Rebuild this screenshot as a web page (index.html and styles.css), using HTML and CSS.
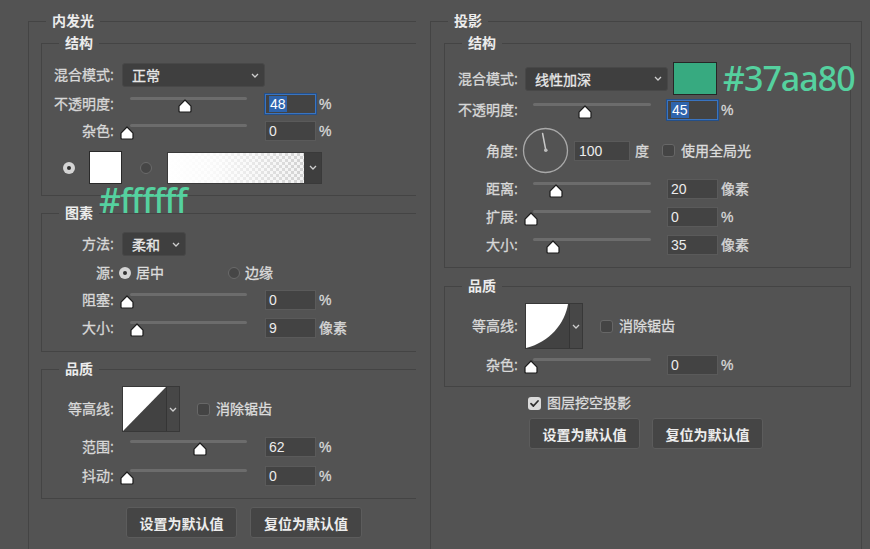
FILE: index.html
```html
<!DOCTYPE html>
<html lang="zh-CN">
<head>
<meta charset="utf-8">
<title>图层样式</title>
<link rel="stylesheet" href="styles.css">
</head>
<body>
<div class="page">
  <section class="col-left">
    <div class="outer outer-left">
      <div class="title">内发光</div>

      <div class="box box-l pl-struct">
        <div class="title">结构</div>
        <div class="row h24">
          <span class="lbl">混合模式:</span>
          <div class="select w143"><span>正常</span><svg class="chev" width="8" height="5" viewBox="0 0 8 5"><path d="M1 1l3 3 3-3" fill="none" stroke="#cfcfcf" stroke-width="1.3"/></svg></div>
        </div>
        <div class="row h20 mt7">
          <span class="lbl">不透明度:</span>
          <div class="slider"><div class="track"></div><svg class="thumb" style="left:56px" width="14" height="14" viewBox="0 0 14 14"><path d="M7 1L13 7.2V12Q13 13 12 13H2Q1 13 1 12V7.2Z" fill="#fff" stroke="#1c1c1c" stroke-width="1.2" stroke-linejoin="round"/></svg></div>
          <div class="num focus"><span class="sel">48</span></div>
          <span class="unit">%</span>
        </div>
        <div class="row h20 mt7">
          <span class="lbl">杂色:</span>
          <div class="slider"><div class="track"></div><svg class="thumb" style="left:-2px" width="14" height="14" viewBox="0 0 14 14"><path d="M7 1L13 7.2V12Q13 13 12 13H2Q1 13 1 12V7.2Z" fill="#fff" stroke="#1c1c1c" stroke-width="1.2" stroke-linejoin="round"/></svg></div>
          <div class="num">0</div>
          <span class="unit">%</span>
        </div>
        <div class="row h33 mt10 colors">
          <span class="radio on"></span>
          <span class="swatch white"></span>
          <span class="radio off r2"></span>
          <div class="gradient"><div class="grad-fill"></div><div class="grad-btn"><svg class="chev" width="8" height="5" viewBox="0 0 8 5"><path d="M1 1l3 3 3-3" fill="none" stroke="#cfcfcf" stroke-width="1.3"/></svg></div></div>
        </div>
      </div>

      <div class="box box-l pl-elem mt17">
        <div class="title">图素</div>
        <div class="row h24">
          <span class="lbl">方法:</span>
          <div class="select w64"><span>柔和</span><svg class="chev" width="8" height="5" viewBox="0 0 8 5"><path d="M1 1l3 3 3-3" fill="none" stroke="#cfcfcf" stroke-width="1.3"/></svg></div>
        </div>
        <div class="row h16 mt9">
          <span class="lbl lbl-tight">源:</span>
          <span class="radio on"></span>
          <span class="opt">居中</span>
          <span class="radio off r-edge"></span>
          <span class="opt">边缘</span>
        </div>
        <div class="row h20 mt9">
          <span class="lbl">阻塞:</span>
          <div class="slider"><div class="track"></div><svg class="thumb" style="left:-2px" width="14" height="14" viewBox="0 0 14 14"><path d="M7 1L13 7.2V12Q13 13 12 13H2Q1 13 1 12V7.2Z" fill="#fff" stroke="#1c1c1c" stroke-width="1.2" stroke-linejoin="round"/></svg></div>
          <div class="num">0</div>
          <span class="unit">%</span>
        </div>
        <div class="row h20 mt8">
          <span class="lbl">大小:</span>
          <div class="slider"><div class="track"></div><svg class="thumb" style="left:8px" width="14" height="14" viewBox="0 0 14 14"><path d="M7 1L13 7.2V12Q13 13 12 13H2Q1 13 1 12V7.2Z" fill="#fff" stroke="#1c1c1c" stroke-width="1.2" stroke-linejoin="round"/></svg></div>
          <div class="num">9</div>
          <span class="unit">像素</span>
        </div>
      </div>

      <div class="box box-l pl-qual mt17">
        <div class="title">品质</div>
        <div class="row h46">
          <span class="lbl">等高线:</span>
          <div class="contour">
            <svg class="curve" width="43" height="44" viewBox="0 0 43 44" preserveAspectRatio="none"><rect width="43" height="44" fill="#424242"/><path d="M0 0H43L0 44Z" fill="#fff"/></svg>
            <div class="contour-btn"><svg class="chev" width="8" height="5" viewBox="0 0 8 5"><path d="M1 1l3 3 3-3" fill="none" stroke="#cfcfcf" stroke-width="1.3"/></svg></div>
          </div>
          <span class="check aa"></span>
          <span class="opt">消除锯齿</span>
        </div>
        <div class="row h20 mt5">
          <span class="lbl">范围:</span>
          <div class="slider"><div class="track"></div><svg class="thumb" style="left:71px" width="14" height="14" viewBox="0 0 14 14"><path d="M7 1L13 7.2V12Q13 13 12 13H2Q1 13 1 12V7.2Z" fill="#fff" stroke="#1c1c1c" stroke-width="1.2" stroke-linejoin="round"/></svg></div>
          <div class="num">62</div>
          <span class="unit">%</span>
        </div>
        <div class="row h20 mt9">
          <span class="lbl">抖动:</span>
          <div class="slider"><div class="track"></div><svg class="thumb" style="left:-2px" width="14" height="14" viewBox="0 0 14 14"><path d="M7 1L13 7.2V12Q13 13 12 13H2Q1 13 1 12V7.2Z" fill="#fff" stroke="#1c1c1c" stroke-width="1.2" stroke-linejoin="round"/></svg></div>
          <div class="num">0</div>
          <span class="unit">%</span>
        </div>
      </div>

      <div class="btns btns-l">
        <button class="btn">设置为默认值</button>
        <button class="btn">复位为默认值</button>
      </div>
    </div>
  </section>

  <section class="col-right">
    <div class="outer outer-right">
      <div class="title">投影</div>

      <div class="box box-r pr-struct">
        <div class="title">结构</div>
        <div class="row h33">
          <span class="lbl">混合模式:</span>
          <div class="select w143"><span>线性加深</span><svg class="chev" width="8" height="5" viewBox="0 0 8 5"><path d="M1 1l3 3 3-3" fill="none" stroke="#cfcfcf" stroke-width="1.3"/></svg></div>
          <span class="swatch green"></span>
        </div>
        <div class="row h20 mt5">
          <span class="lbl">不透明度:</span>
          <div class="slider"><div class="track"></div><svg class="thumb" style="left:53px" width="14" height="14" viewBox="0 0 14 14"><path d="M7 1L13 7.2V12Q13 13 12 13H2Q1 13 1 12V7.2Z" fill="#fff" stroke="#1c1c1c" stroke-width="1.2" stroke-linejoin="round"/></svg></div>
          <div class="num focus"><span class="sel">45</span></div>
          <span class="unit">%</span>
        </div>
        <div class="row h47 mt7">
          <span class="lbl lbl-dial">角度:</span>
          <svg class="dial" width="47" height="47" viewBox="0 0 47 47"><circle cx="23.5" cy="23.5" r="22" fill="none" stroke="#a9a9a9" stroke-width="1.3"/><path d="M23.8 23.2L20.6 6.5" stroke="#c8c8c8" stroke-width="1.5" stroke-linecap="round"/><circle cx="23.8" cy="23.2" r="1.8" fill="#bdbdbd"/></svg>
          <div class="num num-angle">100</div>
          <span class="unit deg">度</span>
          <span class="check global"></span>
          <span class="opt">使用全局光</span>
        </div>
        <div class="row h20 mt5">
          <span class="lbl">距离:</span>
          <div class="slider"><div class="track"></div><svg class="thumb" style="left:24px" width="14" height="14" viewBox="0 0 14 14"><path d="M7 1L13 7.2V12Q13 13 12 13H2Q1 13 1 12V7.2Z" fill="#fff" stroke="#1c1c1c" stroke-width="1.2" stroke-linejoin="round"/></svg></div>
          <div class="num">20</div>
          <span class="unit">像素</span>
        </div>
        <div class="row h20 mt8">
          <span class="lbl">扩展:</span>
          <div class="slider"><div class="track"></div><svg class="thumb" style="left:-1px" width="14" height="14" viewBox="0 0 14 14"><path d="M7 1L13 7.2V12Q13 13 12 13H2Q1 13 1 12V7.2Z" fill="#fff" stroke="#1c1c1c" stroke-width="1.2" stroke-linejoin="round"/></svg></div>
          <div class="num">0</div>
          <span class="unit">%</span>
        </div>
        <div class="row h20 mt8">
          <span class="lbl">大小:</span>
          <div class="slider"><div class="track"></div><svg class="thumb" style="left:21px" width="14" height="14" viewBox="0 0 14 14"><path d="M7 1L13 7.2V12Q13 13 12 13H2Q1 13 1 12V7.2Z" fill="#fff" stroke="#1c1c1c" stroke-width="1.2" stroke-linejoin="round"/></svg></div>
          <div class="num">35</div>
          <span class="unit">像素</span>
        </div>
      </div>

      <div class="box box-r pr-qual mt18">
        <div class="title">品质</div>
        <div class="row h46">
          <span class="lbl">等高线:</span>
          <div class="contour">
            <svg class="curve" width="43" height="44" viewBox="0 0 43 44" preserveAspectRatio="none"><rect width="43" height="44" fill="#424242"/><path d="M0 0H42C39 19 24 38 0 44Z" fill="#fff"/></svg>
            <div class="contour-btn"><svg class="chev" width="8" height="5" viewBox="0 0 8 5"><path d="M1 1l3 3 3-3" fill="none" stroke="#cfcfcf" stroke-width="1.3"/></svg></div>
          </div>
          <span class="check aa"></span>
          <span class="opt">消除锯齿</span>
        </div>
        <div class="row h20 mt6">
          <span class="lbl">杂色:</span>
          <div class="slider"><div class="track"></div><svg class="thumb" style="left:-1px" width="14" height="14" viewBox="0 0 14 14"><path d="M7 1L13 7.2V12Q13 13 12 13H2Q1 13 1 12V7.2Z" fill="#fff" stroke="#1c1c1c" stroke-width="1.2" stroke-linejoin="round"/></svg></div>
          <div class="num">0</div>
          <span class="unit">%</span>
        </div>
      </div>

      <div class="row h16 mt8 knock">
        <span class="check checked"><svg width="13" height="13" viewBox="0 0 13 13"><path d="M3 6.6l2.4 2.4 4.6-5" fill="none" stroke="#2e2e2e" stroke-width="1.8" stroke-linecap="round" stroke-linejoin="round"/></svg></span>
        <span class="opt">图层挖空投影</span>
      </div>

      <div class="btns btns-r">
        <button class="btn">设置为默认值</button>
        <button class="btn">复位为默认值</button>
      </div>
    </div>
  </section>

  <div class="note note-white">#ffffff</div>
  <div class="note note-green">#37aa80</div>
</div>
</body>
</html>
```

FILE: styles.css
```css
* { box-sizing: border-box; }

html, body {
  margin: 0;
  padding: 0;
  background: #535353;
}

body {
  width: 870px;
  height: 549px;
  overflow: hidden;
  font-family: "Liberation Sans", "Noto Sans CJK SC", sans-serif;
  font-size: 14px;
  color: #d6d6d6;
}

.page {
  position: relative;
  display: flex;
  width: 870px;
  height: 549px;
  overflow: hidden;
}

.col-left {
  width: 416px;
  flex: none;
  overflow: hidden;
}

.col-right {
  flex: none;
  margin-left: 14px;
}

/* frames */
.outer {
  position: relative;
  border: 1px solid #444444;
  height: 700px;
  margin-top: 21px;
  padding-top: 21px;
}

.outer-left {
  width: 440px;
  margin-left: 28px;
  padding-left: 12px;
}

.outer-right {
  width: 432px;
  padding-left: 13px;
}

.box {
  position: relative;
  border: 1px solid #444444;
}

.box-l { width: 420px; }
.box-r { width: 407px; }

.title {
  position: absolute;
  top: -9px;
  left: 17px;
  padding: 0 6px;
  background: #535353;
  font-size: 14px;
  line-height: 16px;
  font-weight: bold;
  color: #ececec;
  white-space: nowrap;
}

.pl-struct { padding: 19px 0 11px; }
.pl-elem { padding: 18px 0 13px; }
.pl-qual { padding: 16px 0 12px; }
.pr-struct { padding: 18px 0 12px; }
.pr-qual { padding: 16px 0 11px; }

/* rows */
.row {
  display: flex;
  align-items: center;
}

.h16 { height: 16px; }
.h20 { height: 20px; }
.h24 { height: 24px; }
.h33 { height: 33px; }
.h46 { height: 46px; }
.h47 { height: 47px; }

.mt5 { margin-top: 5px; }
.mt6 { margin-top: 6px; }
.mt7 { margin-top: 7px; }
.mt8 { margin-top: 8px; }
.mt9 { margin-top: 9px; }
.mt10 { margin-top: 10px; }
.mt17 { margin-top: 17px; }
.mt18 { margin-top: 18px; }

.lbl, .opt, .unit, .select {
  -webkit-text-stroke: 0.3px currentColor;
}

.lbl {
  flex: none;
  width: 72px;
  margin-right: 8px;
  text-align: right;
  line-height: 20px;
  white-space: nowrap;
  color: #d8d8d8;
}

.box-r .lbl {
  width: 73px;
  margin-right: 7px;
}

.lbl-tight { margin-right: 5px; }
.box-r .lbl-dial { margin-right: 4px; }

.opt {
  line-height: 16px;
  white-space: nowrap;
  color: #dcdcdc;
  margin-left: 5px;
}

/* select */
.select {
  flex: none;
  display: flex;
  align-items: center;
  justify-content: space-between;
  height: 24px;
  padding: 0 5px 0 9px;
  background: #3f3f3f;
  border: 1px solid #484848;
  border-radius: 3px;
  color: #e8e8e8;
  white-space: nowrap;
}

.w143 { width: 143px; }
.w64 { width: 64px; }

.chev { display: block; flex: none; }

/* slider */
.slider {
  position: relative;
  flex: none;
  width: 125px;
  height: 20px;
  margin-right: 18px;
}

.box-r .slider {
  width: 126px;
  margin-right: 16px;
}

.track {
  position: absolute;
  left: 8px;
  right: 0;
  top: 3px;
  height: 3px;
  border-radius: 2px;
  background: #6c6c6c;
}

.thumb {
  position: absolute;
  top: 5px;
  display: block;
}

/* number input */
.num {
  flex: none;
  display: flex;
  align-items: center;
  width: 51px;
  height: 20px;
  padding-left: 3px;
  background: #434343;
  border: 1px solid #5a5a5a;
  color: #ececec;
  font-size: 14px;
}

.num.focus {
  border-color: #3a74c0;
  box-shadow: 0 0 0 1px #244f88;
}

.sel {
  display: inline-flex;
  align-items: center;
  height: 16px;
  padding: 0 1px;
  background: #2e64ad;
  color: #ffffff;
}

.num-angle {
  width: 56px;
  margin-left: 5px;
  padding-left: 4px;
}

.unit {
  margin-left: 3px;
  line-height: 20px;
  white-space: nowrap;
  color: #d8d8d8;
}

.unit.deg { margin-left: 5px; }

/* radios, checks */
.radio {
  flex: none;
  position: relative;
  width: 12px;
  height: 12px;
  border-radius: 50%;
}

.radio.on {
  background: #d4d4d4;
}

.radio.on::after {
  content: "";
  position: absolute;
  left: 4px;
  top: 4px;
  width: 4px;
  height: 4px;
  border-radius: 50%;
  background: #303030;
}

.radio.off {
  background: #464646;
  border: 1px solid #6a6a6a;
}

.r-edge { margin-left: 64px; }

.check {
  flex: none;
  display: block;
  width: 13px;
  height: 13px;
  border-radius: 3px;
  background: #444444;
  border: 1px solid #676767;
}

.check.checked {
  background: #dadada;
  border: none;
}

.check.checked svg { display: block; }

.check.aa { margin-left: 17px; }
.check.global { margin-left: 13px; }
.check + .opt { margin-left: 6px; }

/* colors row */
.colors { padding-left: 21px; }

.swatch {
  flex: none;
  display: block;
  border: 1px solid #2a2a2a;
}

.swatch.white {
  width: 33px;
  height: 33px;
  margin-left: 14px;
  background: #ffffff;
}

.swatch.green {
  width: 44px;
  height: 33px;
  margin-left: 5px;
  background: #37aa80;
  border-color: #262626;
}

.r2 { margin-left: 18px; }

.gradient {
  flex: none;
  display: flex;
  width: 155px;
  height: 32px;
  margin-left: 15px;
  border: 1px solid #3a3a3a;
}

.grad-fill {
  flex: 1;
  background:
    linear-gradient(to right, #ffffff 0%, rgba(255,255,255,0.85) 35%, rgba(255,255,255,0) 100%),
    conic-gradient(#d2d2d2 25%, #f4f4f4 0 50%, #d2d2d2 0 75%, #f4f4f4 0) 0 0 / 6px 6px;
}

.grad-btn {
  flex: none;
  width: 17px;
  display: flex;
  align-items: center;
  justify-content: center;
  background: #3e3e3e;
}

/* contour */
.contour {
  flex: none;
  display: flex;
  width: 58px;
  height: 46px;
  border: 1px solid #383838;
}

.curve { display: block; flex: none; }

.contour-btn {
  flex: 1;
  display: flex;
  align-items: center;
  justify-content: center;
  background: #474747;
  border-left: 1px solid #353535;
}

/* knockout + buttons */
.knock { padding-left: 84px; }

.btns {
  display: flex;
  gap: 13px;
}

.btns-l {
  margin-top: 8px;
  padding-left: 85px;
}

.btns-r {
  margin-top: 7px;
  padding-left: 85px;
  gap: 12px;
}

.btn {
  width: 111px;
  height: 31px;
  padding: 0;
  background: #454545;
  border: 1px solid #5c5c5c;
  border-radius: 3px;
  font-family: "Liberation Sans", "Noto Sans CJK SC", sans-serif;
  font-size: 14px;
  font-weight: bold;
  color: #ececec;
}

.btns-l .btn + .btn { width: 112px; }

.dial { display: block; flex: none; }

/* annotations */
.note {
  position: absolute;
  font-family: "Noto Sans", sans-serif;
  font-size: 34px;
  line-height: 34px;
  font-weight: 500;
  letter-spacing: -1px;
  color: #55d19f;
  white-space: nowrap;
}

.note-white { left: 99px; top: 183px; }
.note-green { left: 723px; top: 61px; }
```
